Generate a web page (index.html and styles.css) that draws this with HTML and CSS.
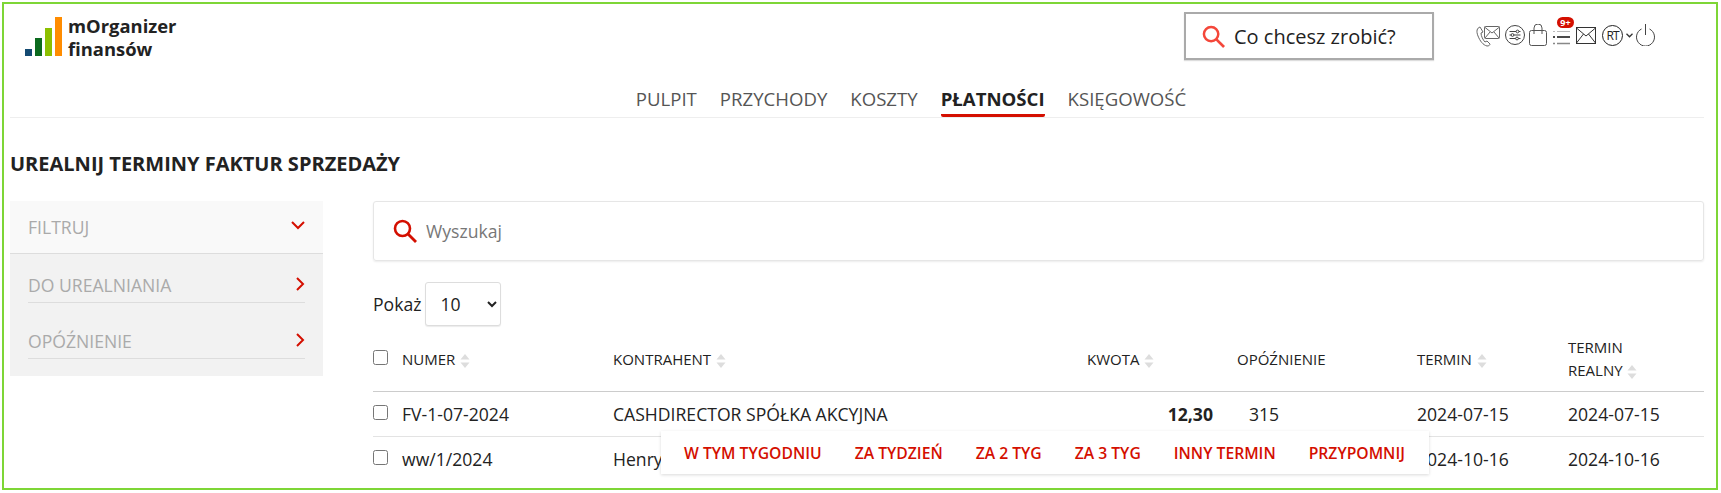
FILE: index.html

```html
<!doctype html>
<html lang="pl">
<head>
 <meta charset="utf-8" />
 <meta name="viewport" content="width=device-width, initial-scale=1" />
 <title>mOrganizer finansów — Urealnij terminy faktur sprzedaży</title>
 <link rel="stylesheet" href="styles.css">
</head>
<body>
 <svg class="sprite" aria-hidden="true">
  <symbol id="lens" viewBox="0 0 24 24">
   <circle cx="9.5" cy="9.5" r="7.5" fill="none" stroke="currentColor" stroke-width="2.6"/>
   <path d="M15 15l8 8" fill="none" stroke="currentColor" stroke-width="2.8"/>
  </symbol>
  <symbol id="sort" viewBox="0 0 10 14">
   <path d="M5 0l4.5 5.5h-9zM5 14L.5 8.5h9z" fill="#ddd"/>
  </symbol>
 </svg>

 <div class="frame">
  <header class="top">
   <a class="logo" href="#">
    <span class="bars"><i class="b1"></i><i class="b2"></i><i class="b3"></i><i class="b4"></i></span>
    <span class="logoText">mOrganizer<br>finansów</span>
   </a>
   <div class="ask">
    <svg class="askIcon"><use href="#lens"/></svg>
    <span>Co chcesz zrobić?</span>
   </div>
   <div class="tools">
    <svg class="tool" width="26" height="24" viewBox="0 0 26 24" fill="none" stroke="#666" stroke-width="1">
     <rect x="9.5" y="3.5" width="15" height="12" rx="1"/>
     <path d="M9.5 4l7.5 6 7.5-6M10 15l5-6M24 15l-5-6"/>
     <path d="M5 4C2 5 1 8 3 13c2 5 5 9 9 10 2 0 3-1 3-2l-3-3-2 1C8 17 6 13 6 10l2-1-3-5z"/>
    </svg>
    <svg class="tool" width="20" height="20" viewBox="0 0 20 20" fill="none" stroke="#444" stroke-width="1">
     <circle cx="10" cy="10" r="9.5"/>
     <path d="M4.5 6.5h11M4.5 10h11M4.5 13.5h11"/>
     <circle cx="12.5" cy="6.5" r="1.4" fill="#fff"/>
     <circle cx="7.5" cy="10" r="1.4" fill="#fff"/>
     <circle cx="12" cy="13.500" r="1.4" fill="#fff"/>
    </svg>
    <svg class="tool" width="18" height="22" viewBox="0 0 18 22" fill="none" stroke="#555" stroke-width="1">
     <rect x=".5" y="6.500" width="17" height="15" rx="2"/>
     <path d="M5 10V4a4 4 0 0 1 8 0v6"/>
    </svg>
    <span class="listTool">
     <svg width="18" height="18" viewBox="0 0 18 18">
      <path d="M0 3.500h2M4 3.500h13" stroke="#bbb" stroke-width="1"/>
      <path d="M0 9h2M4 9h13" stroke="#111" stroke-width="1.400"/>
      <path d="M0 15.500h2M4 15.500h13" stroke="#888" stroke-width="1.400"/>
     </svg>
     <span class="badge">9+</span>
    </span>
    <svg class="tool" width="20" height="17" viewBox="0 0 20 17" fill="none" stroke="#333" stroke-width="1">
     <rect x=".5" y=".5" width="19" height="16"/>
     <path d="M.5 1l9.500 8 9.500-8M.5 16l7-9M19.500 16l-7-9"/>
    </svg>
    <span class="avatar">RT</span>
    <svg class="caret" width="7" height="5" viewBox="0 0 7 5" fill="none" stroke="#333" stroke-width="1.300"><path d="M.5 .8l3 3 3-3"/></svg>
    <svg class="tool" width="19" height="22" viewBox="0 0 19 22" fill="none" stroke="#444" stroke-width="1">
     <path d="M5.500 5a9 9 0 1 0 8 0"/>
     <path d="M9.500 0v11"/>
    </svg>
   </div>
  </header>

  <nav class="menu">
   <a href="#">PULPIT</a>
   <a href="#">PRZYCHODY</a>
   <a href="#">KOSZTY</a>
   <a class="active" href="#">PŁATNOŚCI</a>
   <a href="#">KSIĘGOWOŚĆ</a>
  </nav>

  <h1 class="title">UREALNIJ TERMINY FAKTUR SPRZEDAŻY</h1>

  <div class="layout">
   <aside class="side">
    <div class="sideHead">
     <span>FILTRUJ</span>
     <svg width="14" height="9" viewBox="0 0 14 9" fill="none" stroke="#d40f00" stroke-width="2"><path d="M1 1l6 6 6-6"/></svg>
    </div>
    <div class="sideBody">
     <div class="sideItem">
      <span>DO UREALNIANIA</span>
      <svg width="9" height="14" viewBox="0 0 9 14" fill="none" stroke="#d40f00" stroke-width="2"><path d="M1 1l6 6-6 6"/></svg>
     </div>
     <div class="sideItem">
      <span>OPÓŹNIENIE</span>
      <svg width="9" height="14" viewBox="0 0 9 14" fill="none" stroke="#d40f00" stroke-width="2"><path d="M1 1l6 6-6 6"/></svg>
     </div>
    </div>
   </aside>

   <main class="content">
    <div class="searchCard">
     <svg class="searchIcon"><use href="#lens"/></svg>
     <span>Wyszukaj</span>
    </div>

    <div class="pageSize">
     <label for="size">Pokaż</label>
     <select id="size"><option>10</option><option>25</option><option>50</option></select>
    </div>

    <div class="tableWrap">
     <table class="grid">
      <colgroup>
       <col class="cCheck"><col class="cNum"><col class="cName"><col class="cAmount"><col class="cLate"><col class="cDate"><col>
      </colgroup>
      <thead>
       <tr>
        <th><input type="checkbox"></th>
        <th>NUMER <svg class="sort"><use href="#sort"/></svg></th>
        <th>KONTRAHENT <svg class="sort"><use href="#sort"/></svg></th>
        <th>KWOTA <svg class="sort"><use href="#sort"/></svg></th>
        <th>OPÓŹNIENIE</th>
        <th>TERMIN <svg class="sort"><use href="#sort"/></svg></th>
        <th>TERMIN<br>REALNY <svg class="sort"><use href="#sort"/></svg></th>
       </tr>
      </thead>
      <tbody>
       <tr>
        <td><input type="checkbox"></td>
        <td>FV-1-07-2024</td>
        <td>CASHDIRECTOR SPÓŁKA AKCYJNA</td>
        <td class="amount">12,30</td>
        <td class="late">315</td>
        <td>2024-07-15</td>
        <td>2024-07-15</td>
       </tr>
       <tr>
        <td><input type="checkbox"></td>
        <td>ww/1/2024</td>
        <td>Henry</td>
        <td class="amount"></td>
        <td class="late"></td>
        <td>2024-10-16</td>
        <td>2024-10-16</td>
       </tr>
      </tbody>
     </table>
     <div class="actions">
      <a href="#">W TYM TYGODNIU</a>
      <a href="#">ZA TYDZIEŃ</a>
      <a href="#">ZA 2 TYG</a>
      <a href="#">ZA 3 TYG</a>
      <a href="#">INNY TERMIN</a>
      <a href="#">PRZYPOMNIJ</a>
     </div>
    </div>
   </main>
  </div>
 </div>
</body>
</html>
```

FILE: styles.css

```css
*{box-sizing:border-box}
html,body{height:100%}
body{
margin:0; padding:2px 3px 3px 2px;
font-family:"Open Sans",Arial,sans-serif;
color:#222; background:#fff;
overflow:hidden;
}
a{color:inherit; text-decoration:none}
.sprite{display:none}

.frame{
height:100%;
border:2px solid #7ed636;
padding:0 12px 0 6px;
overflow:hidden;
}

/* top bar */
.top{display:flex; align-items:flex-start; height:72px; position:relative}
.logo{display:flex; align-items:flex-start; margin:10px 0 0 15px}
.bars{display:flex; align-items:flex-end; gap:3px; height:39px; width:38px; margin-top:3px}
.bars i{display:block; width:7px}
.b1{height:7px; background:#144a72}
.b2{height:18px; background:#0b6a1e}
.b3{height:28px; background:#8cc000}
.b4{height:39px; background:#ff8c00}
.logoText{margin-left:5px; font-size:18.4px; font-weight:700; line-height:23px; color:#222}

.ask{
margin:8px 0 0 auto;
width:250px; height:48px;
border:2px solid #aaa;
box-shadow:0 1px 1px #ddd;
display:flex; align-items:center;
padding-left:16px;
font-size:20px;
}
.askIcon{width:23px; height:23px; color:#f4473a; margin-right:9px}

.tools{display:flex; align-items:center; margin:19px 45px 0 41px; height:24px; position:relative}
.tool{flex:none; margin-right:4px}
.listTool{position:relative; display:block; width:18px; height:18px; margin:3px 5px 0 2px}
.listTool svg{display:block}
.badge{
position:absolute; top:-11px; left:4px;
width:17px; height:11px; border-radius:6px;
background:#d40f00; color:#fff;
font-size:9px; font-weight:700; line-height:11px; text-align:center;
}
.avatar{
width:21px; height:21px; border:1px solid #222; border-radius:50%;
margin-left:2px;
font-size:12px; letter-spacing:-1px; line-height:19px; text-align:center;
}
.caret{margin:0 3px}

/* main menu */
.menu{
display:flex; justify-content:center; gap:23px;
height:42px;
border-bottom:1px solid #eee;
font-size:18.6px; line-height:46px;
color:#555;
padding-left:108px;
}
.menu a{height:41px}
.menu .active{color:#222; font-weight:700; border-bottom:3px solid #d40f00; border-radius:0 0 2px 2px}

.title{margin:31px 0 0; font-size:20px; font-weight:700; line-height:30px; color:#222}

.layout{display:flex; margin-top:22px; align-items:flex-start}

/* left filter */
.side{flex:none; width:313px; color:#aaa; font-size:17.6px}
.sideHead{
height:53px; padding:0 18px;
background:#f9f9f9; border-bottom:1px solid #ddd;
display:flex; align-items:center; justify-content:space-between;
}
.sideHead svg{margin-top:-3px}
.sideBody{background:#f2f2f2; padding:0 18px; height:122px}
.sideItem{
padding:26px 0 5px;
line-height:24px;
border-bottom:1px solid #ddd;
display:flex; justify-content:space-between; align-items:flex-start;
}
.sideItem:first-child{padding-top:19px}
.sideItem svg{margin-top:4px}

/* right column */
.content{flex:1; min-width:0; margin-left:50px}
.searchCard{
height:60px; padding-left:19px;
border:1px solid #e6e6e6; border-radius:3px;
box-shadow:0 1px 2px rgba(0,0,0,.08);
display:flex; align-items:center;
font-size:17.6px; color:#777;
}
.searchIcon{width:24px; height:24px; color:#d40f00; margin-right:9px}

.pageSize{display:flex; align-items:center; gap:4px; margin-top:21px; font-size:17.6px}
.pageSize select{
width:76px; height:44px; padding:0 0 0 10px;
border:1px solid #ddd; border-radius:3px;
background:#fff; color:#222;
font:17.6px "Open Sans",Arial,sans-serif;
box-shadow:0 1px 1px rgba(0,0,0,.08);
}

.tableWrap{position:relative; margin-top:8px}
.grid{width:100%; border-collapse:collapse; table-layout:fixed}
.cCheck{width:29px}
.cNum{width:211px}
.cName{width:474px}
.cAmount{width:150px}
.cLate{width:180px}
.cDate{width:151px}
.grid th{
height:57px; padding:0 0 6px;
border-bottom:1px solid #ccc;
font-size:15px; font-weight:400; line-height:23px; text-align:left;
color:#222;
}
.grid td{
height:45px; padding:0;
border-bottom:1px solid #e3e3e3;
font-size:17.6px; line-height:22px;
color:#222;
}
.grid tbody tr:last-child td{border-bottom:0}
.grid input{display:block; width:15px; height:15px; margin:-3px 0 0}
.grid th input{margin-top:-4px}
.sort{width:10px; height:14px; vertical-align:-3px; margin-left:1px}
.amount{text-align:right; padding-right:24px !important; font-weight:700}
.late{padding-left:12px !important}

.actions{
position:absolute; left:288px; top:97px;
width:768px; height:43px; padding-left:23px;
background:#fff;
box-shadow:0 1px 3px rgba(0,0,0,.15);
display:flex; align-items:center; justify-content:flex-start; gap:33px;
font-size:15.7px; font-weight:600; color:#d40f00;
}
```
